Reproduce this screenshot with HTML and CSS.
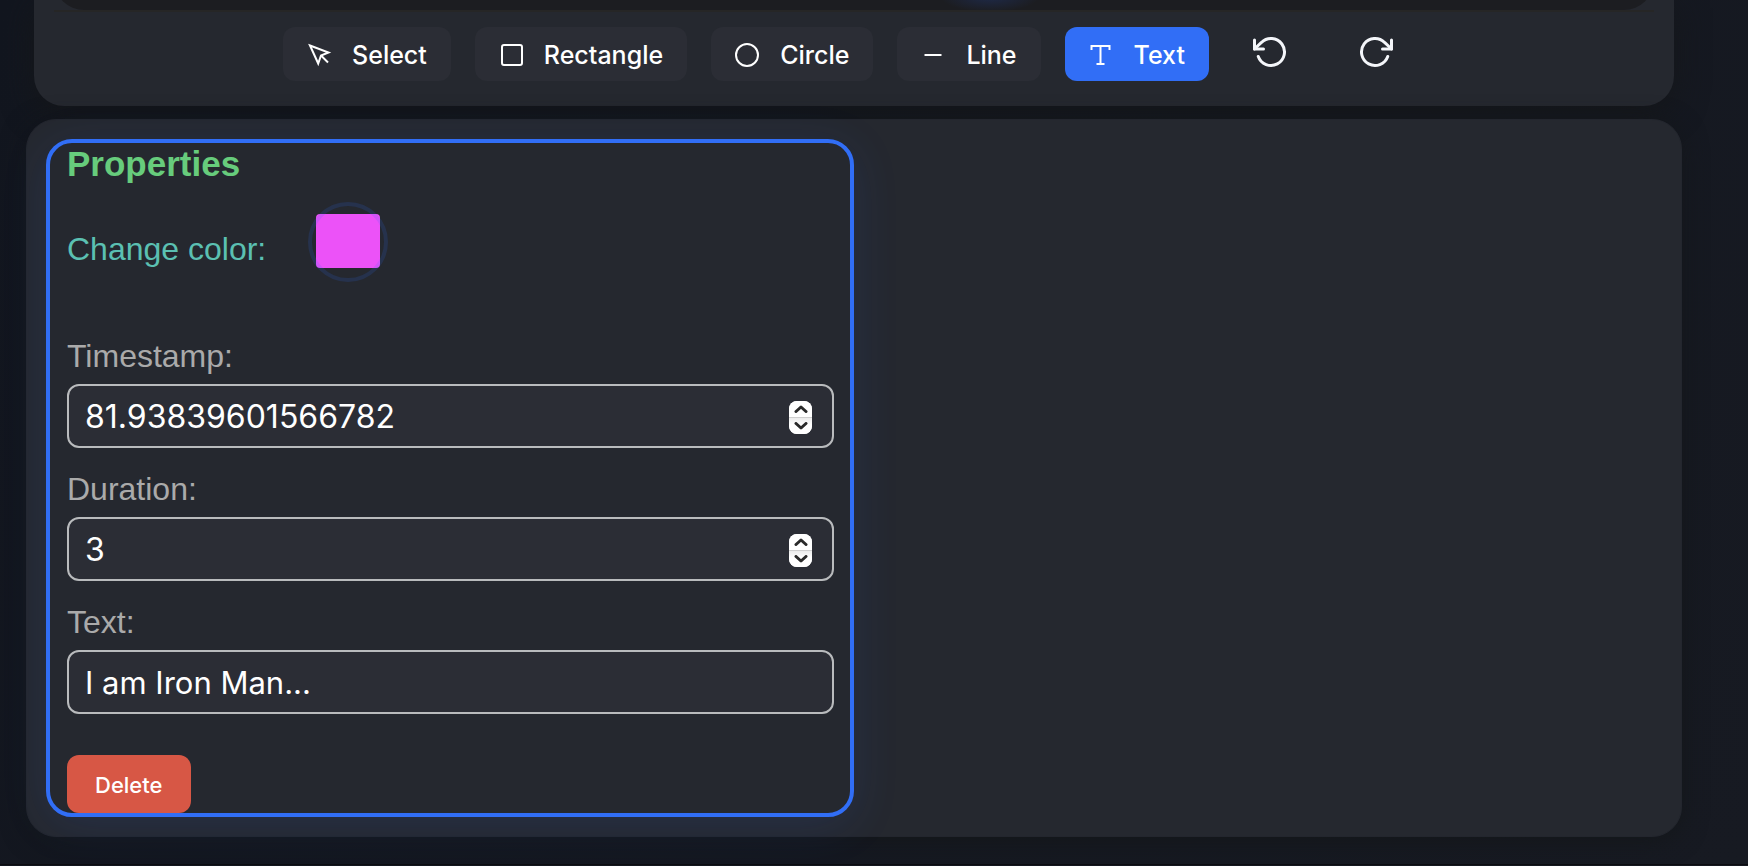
FILE: index.html
```html
<!DOCTYPE html>
<html lang="en">
<head>
<meta charset="utf-8">
<meta name="viewport" content="width=device-width, initial-scale=1">
<title>Annotation editor</title>
<link rel="stylesheet" href="styles.css">
</head>
<body>
<main class="editor">
  <section class="stage">
    <div class="canvas"></div>
    <div class="toolbar" role="toolbar" aria-label="Drawing tools">
      <button type="button" class="tool">
        <svg class="tool-icon" viewBox="0 1 28 28" aria-hidden="true"><path d="M5 5.500 23.500 12.500 16 15.500 13.200 23.500Z"/><path d="M16 15.500 23 22.500"/></svg>
        Select
      </button>
      <button type="button" class="tool">
        <svg class="tool-icon" viewBox="0 1 28 28" aria-hidden="true"><rect x="5" y="5" width="20" height="20" rx="2"/></svg>
        Rectangle
      </button>
      <button type="button" class="tool">
        <svg class="tool-icon" viewBox="0 1 28 28" aria-hidden="true"><circle cx="14" cy="15" r="11"/></svg>
        Circle
      </button>
      <button type="button" class="tool">
        <svg class="tool-icon" viewBox="0 1 28 28" aria-hidden="true"><path d="M5.500 15H22.500"/></svg>
        Line
      </button>
      <button type="button" class="tool tool-active" aria-pressed="true">
        <svg class="tool-icon" viewBox="0 1 28 28" aria-hidden="true"><path d="M4.500 10V6H22.500V10M13.500 6V24M9.500 24H17.500"/></svg>
        Text
      </button>
      <div class="history">
        <button type="button" class="history-button" aria-label="Undo">
          <svg class="history-icon" viewBox="0 0 24 24" aria-hidden="true"><path d="M1 4V10H7"/><path d="M3.510 15a9 9 0 1 0 2.130-9.360L1 10"/></svg>
        </button>
        <button type="button" class="history-button" aria-label="Redo">
          <svg class="history-icon" viewBox="0 0 24 24" aria-hidden="true"><path d="M23 4V10H17"/><path d="M20.490 15a9 9 0 1 1-2.120-9.360L23 10"/></svg>
        </button>
      </div>
    </div>
  </section>

  <section class="panel">
    <form class="properties">
      <h3 class="title">Properties</h3>
      <div class="color-row">
        <label class="color-label" for="color">Change color:</label>
        <span class="swatch"><input class="swatch-input" id="color" type="color" value="#ec52f8"></span>
      </div>
      <div class="fields">
        <div class="field">
          <label class="field-label" for="timestamp">Timestamp:</label>
          <div class="control">
            <input class="control-input" id="timestamp" type="number" step="any" value="81.93839601566782">
            <span class="stepper">
              <button type="button" class="step" aria-label="Increase timestamp"><svg class="step-icon" viewBox="0 0 14 8" aria-hidden="true"><path d="M2 6.500 7 2 12 6.500"/></svg></button>
              <button type="button" class="step" aria-label="Decrease timestamp"><svg class="step-icon" viewBox="0 0 14 8" aria-hidden="true"><path d="M2 1.500 7 6 12 1.500"/></svg></button>
            </span>
          </div>
        </div>
        <div class="field">
          <label class="field-label" for="duration">Duration:</label>
          <div class="control">
            <input class="control-input" id="duration" type="number" value="3">
            <span class="stepper">
              <button type="button" class="step" aria-label="Increase duration"><svg class="step-icon" viewBox="0 0 14 8" aria-hidden="true"><path d="M2 6.500 7 2 12 6.500"/></svg></button>
              <button type="button" class="step" aria-label="Decrease duration"><svg class="step-icon" viewBox="0 0 14 8" aria-hidden="true"><path d="M2 1.500 7 6 12 1.500"/></svg></button>
            </span>
          </div>
        </div>
        <div class="field">
          <label class="field-label" for="text">Text:</label>
          <div class="control">
            <input class="control-input control-text" id="text" type="text" value="I am Iron Man...">
          </div>
        </div>
      </div>
      <button type="button" class="delete">Delete</button>
    </form>
  </section>
</main>
</body>
</html>
```
FILE: styles.css
```css
* {
  box-sizing: border-box;
}

body {
  margin: 0;
  background: linear-gradient(135deg, #12161f, #171a22);
  color: #ffffff;
  font-family: "Liberation Sans", Arial, sans-serif;
}

button,
input {
  font-family: Inter, sans-serif;
  color: inherit;
}

.editor {
  display: flex;
  flex-direction: column;
  gap: 13px;
  padding: 0 66px 27px 26px;
  border-bottom: 1px solid #0c0c10;
  overflow: hidden;
}

/* Drawing stage */
.stage {
  margin: 0 8px;
  padding: 0 20px 25px;
  border-radius: 0 0 30px 30px;
  background: #25282f;
  box-shadow: 0 8px 32px #15171a;
}

.canvas {
  height: 60px;
  margin-top: -50px;
  border-radius: 30px;
  background: radial-gradient(ellipse 50px 16px at 936px 46px, #1e2a4a, #1c1d21);
}

.toolbar {
  display: flex;
  justify-content: center;
  gap: 24px;
  padding: 15px 12px 0 0;
  border-top: 2px solid #262626;
}

.tool {
  display: flex;
  align-items: center;
  gap: 19px;
  height: 54px;
  padding: 2px 24px 0 22px;
  border: 0;
  border-radius: 12px;
  background: #2b2d35;
  font-size: 25px;
  font-weight: 500;
}

.tool-active {
  background: #316ef6;
}

.tool-icon {
  width: 28px;
  height: 28px;
  fill: none;
  stroke: currentColor;
  stroke-width: 2;
  overflow: visible;
}

.history {
  display: flex;
  gap: 28px;
}

.history-button {
  display: flex;
  align-items: center;
  justify-content: center;
  width: 76px;
  padding: 0 0 4px;
  border: 0;
  background: none;
}

.history-icon {
  width: 36px;
  height: 36px;
  fill: none;
  stroke: #f4f6fa;
  stroke-width: 2;
  stroke-linecap: round;
  stroke-linejoin: round;
}

/* Properties panel */
.panel {
  padding: 19px;
  border: 1px solid #23262e;
  border-radius: 30px;
  background: #25282f;
  box-shadow: 0 4px 24px #14171a;
}

.properties {
  width: 50%;
  padding: 0 16px 0 17px;
  border: 4px solid #316ef6;
  border-radius: 26px;
  background: #25282f;
  box-shadow: 0 8px 48px rgba(49, 110, 246, 0.12);
}

.title {
  margin: 0 0 17px;
  color: #67cc7c;
  font-size: 35px;
  line-height: 42px;
}

.color-row {
  display: flex;
  align-items: center;
  gap: 42px;
  margin-bottom: 56px;
}

.color-label {
  padding-top: 14px;
  color: #5bc0b2;
  font-size: 32px;
  line-height: 36px;
}

.swatch {
  position: relative;
  width: 80px;
  height: 80px;
  padding: 12px 8px 14px;
}

.swatch::after {
  content: "";
  position: absolute;
  inset: 0;
  border: 4px solid rgba(49, 110, 246, 0.15);
  border-radius: 50%;
  pointer-events: none;
}

.swatch-input {
  display: block;
  width: 100%;
  height: 100%;
  padding: 0;
  border: 0;
  background: none;
}

.swatch-input::-webkit-color-swatch-wrapper {
  padding: 0;
}

.swatch-input::-webkit-color-swatch {
  border: 0;
  border-radius: 4px;
}

.fields {
  display: flex;
  flex-direction: column;
  gap: 23px;
  margin-bottom: 41px;
}

.field {
  display: flex;
  flex-direction: column;
  gap: 10px;
}

.field-label {
  color: #aaaaaa;
  font-size: 32px;
  line-height: 36px;
}

.control {
  display: flex;
  align-items: center;
  height: 64px;
  padding: 0 20px 0 16px;
  border: 2px solid #b9bbbd;
  border-radius: 12px;
  background: #2b2d35;
}

.control-input {
  flex: 1;
  min-width: 0;
  padding: 0;
  border: 0;
  outline: 0;
  background: none;
  font-size: 32px;
  appearance: textfield;
}

.control-text {
  font-size: 31px;
}

.control-input::-webkit-inner-spin-button {
  display: none;
}

.stepper {
  display: flex;
  flex-direction: column;
  width: 23px;
  height: 33px;
  margin-top: 2px;
  border-radius: 8px;
  background: #ffffff;
  overflow: hidden;
}

.step {
  display: flex;
  flex: 1;
  align-items: center;
  justify-content: center;
  padding: 0;
  border: 0;
  background: #ffffff;
}

.step + .step {
  border-top: 1px solid #cfcfcf;
  background: linear-gradient(#ececec, #ffffff 40%);
}

.step-icon {
  width: 14px;
  height: 8px;
  fill: none;
  stroke: #2a2a2a;
  stroke-width: 3;
  stroke-linecap: round;
  stroke-linejoin: round;
}

.delete {
  display: block;
  height: 58px;
  padding: 2px 29px 0 28px;
  border: 0;
  border-radius: 12px;
  background: #d75745;
  font-size: 22px;
  font-weight: 500;
}
```
